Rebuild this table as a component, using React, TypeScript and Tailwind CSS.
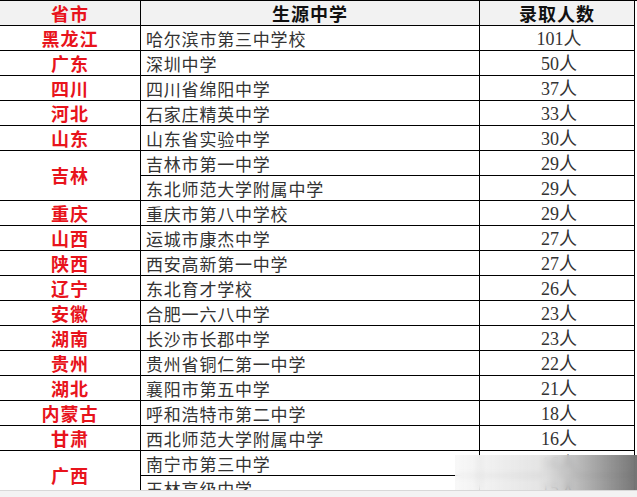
import React from "react";

type Row = { province?: string; span?: number; school: string; count: string };

const rows: Row[] = [
  { province: "黑龙江", school: "哈尔滨市第三中学校", count: "101人" },
  { province: "广东", school: "深圳中学", count: "50人" },
  { province: "四川", school: "四川省绵阳中学", count: "37人" },
  { province: "河北", school: "石家庄精英中学", count: "33人" },
  { province: "山东", school: "山东省实验中学", count: "30人" },
  { province: "吉林", span: 2, school: "吉林市第一中学", count: "29人" },
  { school: "东北师范大学附属中学", count: "29人" },
  { province: "重庆", school: "重庆市第八中学校", count: "29人" },
  { province: "山西", school: "运城市康杰中学", count: "27人" },
  { province: "陕西", school: "西安高新第一中学", count: "27人" },
  { province: "辽宁", school: "东北育才学校", count: "26人" },
  { province: "安徽", school: "合肥一六八中学", count: "23人" },
  { province: "湖南", school: "长沙市长郡中学", count: "23人" },
  { province: "贵州", school: "贵州省铜仁第一中学", count: "22人" },
  { province: "湖北", school: "襄阳市第五中学", count: "21人" },
  { province: "内蒙古", school: "呼和浩特市第二中学", count: "18人" },
  { province: "甘肃", school: "西北师范大学附属中学", count: "16人" },
  { province: "广西", span: 2, school: "南宁市第三中学", count: "16人" },
  { school: "玉林高级中学", count: "15人" },
];

const cjk = "font-['Noto_Sans_CJK_SC',sans-serif]";
const num = "font-['Liberation_Serif','Noto_Sans_CJK_SC',serif]";
const cell = "border-b border-r border-black flex items-center";

export default function App() {
  return (
    <div className="w-[637px] h-[497px] bg-white overflow-hidden relative">
      <div className="h-[490px] overflow-hidden">
        <div
          className={`grid grid-cols-[141px_339px_155px] auto-rows-[25px] border-t border-black ${cjk}`}
        >
          {/* header */}
          <div className={`${cell} justify-center bg-[#f2f2f2] text-[18px] font-bold text-[#e8141c] tracking-[1px]`}>
            省市
          </div>
          <div className={`${cell} justify-center bg-[#f2f2f2] text-[18px] font-bold text-[#111] tracking-[1px]`}>
            生源中学
          </div>
          <div className={`${cell} justify-center bg-[#f2f2f2] text-[18px] font-bold text-[#111] tracking-[1px]`}>
            录取人数
          </div>

          {rows.map((r, i) => (
            <React.Fragment key={i}>
              {r.province && (
                <div
                  className={`${cell} justify-center text-[18px] font-bold text-[#e8141c] tracking-[1px] ${
                    r.span === 2 ? "row-span-2" : ""
                  }`}
                >
                  {r.province}
                </div>
              )}
              <div className={`${cell} pl-[5px] pt-[2px] text-[17px] text-[#333] tracking-[0.8px]`}>
                {r.school}
              </div>
              <div className={`${cell} justify-center pt-[3px] pl-[4px] text-[18px] text-[#333] ${num}`}>
                {r.count}
              </div>
            </React.Fragment>
          ))}
        </div>
      </div>
      <div className="h-[7px] bg-[#f3f3f3] border-t border-[#d8d8d8]" />

      {/* blurred overlay bottom right */}
      <div className="absolute left-[455px] top-[455px] w-[182px] h-[35px] backdrop-blur-[3px] bg-gradient-to-r from-[#f7f7f7]/85 via-[#dcdcdc]/80 to-[#6e6e6e]/95" />
    </div>
  );
}
